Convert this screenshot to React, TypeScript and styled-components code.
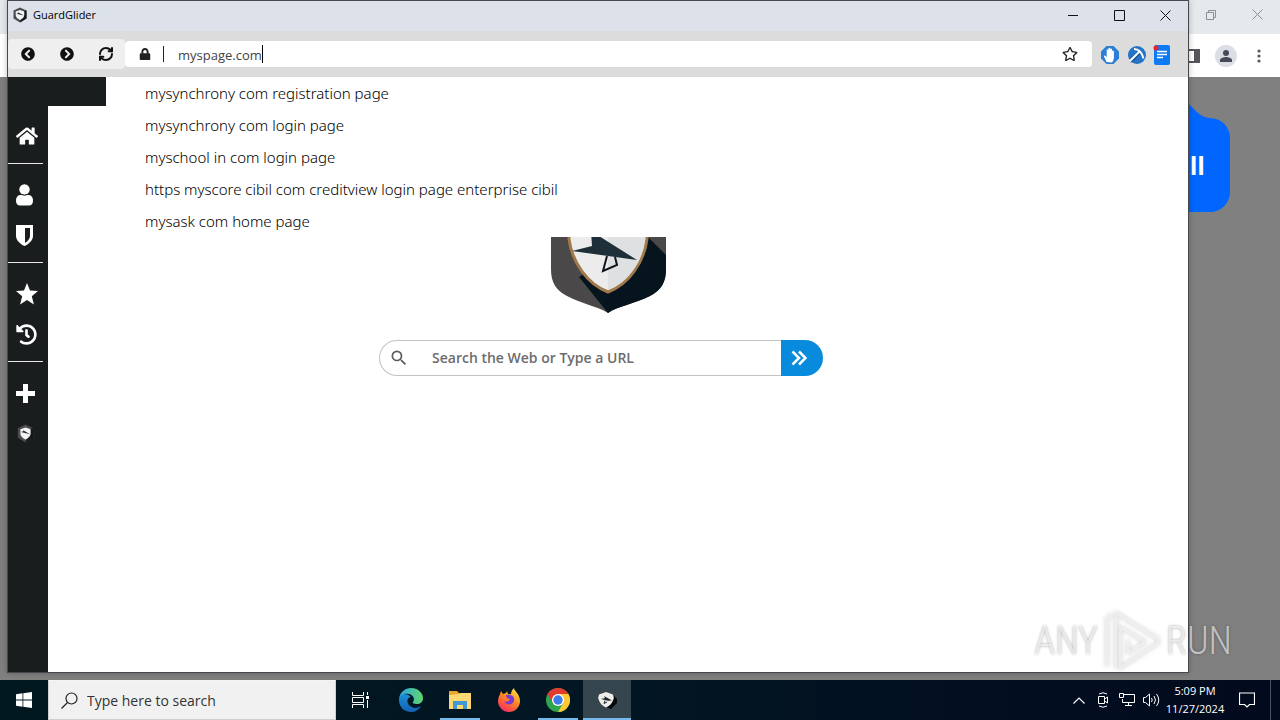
import React from "react";
import styled, { createGlobalStyle, css } from "styled-components";
import {
  FaChevronCircleLeft,
  FaChevronCircleRight,
  FaLock,
  FaRegStar,
  FaHome,
  FaHistory,
} from "react-icons/fa";
import { MdSearch } from "react-icons/md";
import { RefreshCw } from "lucide-react";

const GlobalStyle = createGlobalStyle`
  *, *::before, *::after { box-sizing: border-box; }
  html, body { margin: 0; padding: 0; }
  body { font-family: "Open Sans", "Noto Sans", sans-serif; color: #1c1c1c; }
  button, input { font: inherit; color: inherit; }
  button { border: 0; padding: 0; background: none; display: flex; align-items: center; justify-content: center; }
  svg { display: block; flex: none; }
`;

const Desktop = styled.div`
  position: relative;
  display: flex;
  flex-direction: column;
  height: 100vh;
  min-height: 560px;
  overflow: hidden;
`;

const Stage = styled.div`
  position: relative;
  flex: 1;
  display: flex;
  min-height: 0;
`;

/* Browser window in the background */
const BackWindow = styled.section`
  flex: 1;
  display: flex;
  flex-direction: column;
  background: #808080;
`;

const BackTitle = styled.div`
  height: 34px;
  display: flex;
  justify-content: flex-end;
  align-items: flex-start;
  background: #e6e9ec;
`;

const BackToolbar = styled.div`
  height: 43px;
  display: flex;
  align-items: center;
  justify-content: flex-end;
  gap: 10px;
  padding-right: 9px;
  background: #fff;
`;

const Avatar = styled.button`
  width: 22px;
  height: 22px;
  border-radius: 50%;
  background: #dbdee5;
`;

const BackPage = styled.div`
  display: flex;
  flex-direction: column;
  align-items: flex-end;
  padding: 24px 50px 0 0;
`;

const Install = styled.button`
  width: 260px;
  height: 94px;
  justify-content: flex-end;
  padding-right: 25px;
  border-radius: 0 20px 20px 0;
  background: #0066ff;
  color: #fff;
  font-size: 25px;
  font-weight: 700;
`;

const CaptionButton = styled.button<{ $faded?: boolean }>`
  width: 46px;
  height: 29px;
  color: ${(p) => (p.$faded ? "#8b8e92" : "#111")};
`;

/* Browser window in front */
const FrontWindow = styled.section`
  position: absolute;
  inset: 0 91px 7px 7px;
  display: flex;
  flex-direction: column;
  border: 1px solid #47474f;
  background: #fff;
  box-shadow: 0 0 6px rgba(0, 0, 0, 0.25);
`;

const TitleBar = styled.header`
  height: 30px;
  display: flex;
  align-items: flex-start;
  background: #dde1ea;
`;

const WindowTitle = styled.h1`
  flex: 1;
  display: flex;
  align-items: center;
  gap: 5px;
  margin: 0;
  padding: 6px 0 0 4px;
  font-size: 11px;
  line-height: 16px;
  font-weight: 400;
  color: #000;
`;

const Toolbar = styled.div`
  height: 46px;
  display: flex;
  align-items: center;
  padding-right: 16px;
  background: #dcdcdc;
`;

const NavGroup = styled.nav`
  display: flex;
  height: 30px;
  border-radius: 4px;
  background: #efefef;
  color: #111;
`;

const NavButton = styled.button`
  width: 39px;
`;

const AddressBar = styled.label`
  flex: 1;
  display: flex;
  align-items: center;
  height: 26px;
  padding: 0 14px;
  border-radius: 4px;
  background: #fff;
  color: #222;
`;

const Divider = styled.span`
  width: 1px;
  height: 16px;
  margin: 0 14px 0 12px;
  background: #222;
`;

const AddressInput = styled.input`
  field-sizing: content;
  border: 0;
  outline: 0;
  padding: 2px 0 0;
  background: transparent;
  font-size: 13px;
  line-height: 18px;
  color: #444;
`;

const Caret = styled.span`
  width: 1px;
  height: 18px;
  background: #000;
`;

const Spacer = styled.span`
  flex: 1;
`;

const Extensions = styled.div`
  display: flex;
  gap: 6px;
  padding: 2px 0 0 8px;
`;

const ExtensionButton = styled.button`
  width: 20px;
  height: 22px;
`;

const Body = styled.div`
  position: relative;
  flex: 1;
  display: flex;
  min-height: 0;
`;

const Sidebar = styled.aside`
  width: 40px;
  padding: 28px 5px 0 0;
  background: #191d1e;
  color: #fff;
`;

const SideSection = styled.div`
  display: flex;
  flex-direction: column;
  padding: 11px 0 7px;
  border-bottom: 1px solid #e8e8e8;
  &:last-child { border-bottom: 0; }
`;

const SideButton = styled.button`
  height: 40px;
  justify-content: flex-start;
  padding-left: 8px;
`;

const MainColumn = styled.div`
  flex: 1;
  display: flex;
  flex-direction: column;
`;

const TabStrip = styled.div`
  width: 58px;
  height: 29px;
  background: #191d1e;
`;

const NewTabPage = styled.main`
  flex: 1;
  display: flex;
  flex-direction: column;
  align-items: center;
  gap: 27px;
  padding: 87px 34px 0 0;
`;

const PageLogo = styled.div`
  margin-left: 15px;
`;

const SearchForm = styled.form`
  display: flex;
  width: 444px;
  height: 36px;
`;

const SearchField = styled.label`
  flex: 1;
  display: flex;
  align-items: center;
  gap: 23px;
  padding-left: 9px;
  border: 1px solid #c4c4c4;
  border-right: 0;
  border-radius: 18px 0 0 18px;
  color: #5c5c5c;
`;

const SearchInput = styled.input`
  flex: 1;
  min-width: 0;
  border: 0;
  outline: 0;
  padding: 0;
  background: transparent;
  font-size: 14px;
  line-height: 20px;
  font-weight: 600;
  &::placeholder { color: #6c6c6c; opacity: 1; }
`;

const SearchGo = styled.button`
  width: 42px;
  padding-right: 6px;
  border-radius: 0 18px 18px 0;
  background: #088bdc;
  color: #fff;
`;

const Suggestions = styled.ul`
  position: absolute;
  inset: 0 0 auto 98px;
  margin: 0;
  padding: 0;
  list-style: none;
  background: #fff;
`;

const Suggestion = styled.li`
  height: 32px;
  padding-left: 39px;
  font-family: "Noto Sans", "Open Sans", sans-serif;
  font-size: 15px;
  line-height: 32px;
  font-weight: 300;
  color: #000;
`;

/* Watermark */
const Watermark = styled.div`
  position: absolute;
  right: 48px;
  bottom: 48px;
  display: flex;
  align-items: center;
  gap: 5px;
  font-family: "Roboto Condensed", "Liberation Sans Narrow", "Liberation Sans", sans-serif;
  font-size: 38px;
  line-height: 62px;
  font-weight: 300;
  color: rgba(255, 255, 255, 0.6);
  text-shadow: 0 0 3px rgba(0, 0, 0, 0.35);
  pointer-events: none;
`;

const WatermarkSign = styled.svg`
  filter: drop-shadow(0 0 2px rgba(0, 0, 0, 0.25));
`;

/* Taskbar */
const Taskbar = styled.footer`
  flex: none;
  height: 40px;
  display: flex;
  background: linear-gradient(90deg, #011820, #021523 50%, #020a1e);
  color: #fff;
`;

const StartButton = styled.button`
  width: 48px;
`;

const TaskSearch = styled.label`
  width: 288px;
  display: flex;
  align-items: center;
  gap: 9px;
  padding-left: 12px;
  border: 1px solid #cfcfcf;
  border-top-color: #f4f4f4;
  background: #f1f1f1;
  color: #222;
`;

const TaskInput = styled.input`
  flex: 1;
  min-width: 0;
  border: 0;
  outline: 0;
  padding: 2px 0 0;
  background: transparent;
  font-size: 14px;
  line-height: 20px;
  &::placeholder { color: #333; opacity: 1; }
`;

const TaskView = styled.button`
  width: 48px;
  margin-right: 3px;
`;

const Apps = styled.div`
  display: flex;
  gap: 1px;
  flex: 1;
`;

const AppButton = styled.button<{ $state?: "open" | "active" }>`
  width: 48px;
  ${(p) =>
    p.$state === "open" &&
    css`
      background: linear-gradient(#76b9ed, #76b9ed) center bottom / 40px 2px no-repeat;
    `}
  ${(p) =>
    p.$state === "active" &&
    css`
      background: linear-gradient(#76b9ed, #76b9ed) center bottom / 48px 2px no-repeat #36464f;
    `}
`;

const Tray = styled.div`
  display: flex;
  padding-right: 4px;
`;

const TrayButton = styled.button<{ $wide?: boolean }>`
  width: ${(p) => (p.$wide ? 40 : 24)}px;
`;

const Clock = styled.button`
  width: 64px;
  flex-direction: column;
  font-size: 11px;
  line-height: 18px;
`;

const ShowDesktop = styled.button`
  width: 6px;
  margin-left: 3px;
  border-left: 1px solid #4c5566;
`;

const CloseGlyph = () => (
  <svg width="11" height="11" viewBox="0 0 11 11" stroke="currentColor" fill="none">
    <path d="M.5 .5l10 10M10.500 .5l-10 10" />
  </svg>
);

const ShieldBadge = ({ size }: { size: number }) => (
  <svg width={size} height={size} viewBox="0 0 16 16">
    <path d="M8 .5L14.500 3.500v8L8 15.500 1.500 11.500v-8z" fill="#4a4d4f" />
    <path d="M8 15.500l6.500-4v-8L12 4z" fill="#11171b" />
    <path d="M8 3l4.300 1.500v3.300C12.300 10.500 10.200 12 8 13 5.800 12 3.700 10.500 3.700 7.800V4.500z" fill="#f3f3f3" />
    <path d="M4.200 6.800l2-.6-.2-1 5.800 3.400z" fill="#1c2a33" />
  </svg>
);

const BigShield = () => (
  <svg width="115" height="120" viewBox="0 0 115 120">
    <path d="M0 15L57 0l58 15v61c0 14-5 21-16 27-16 8-32 10-42 17C46 113 31 111 16 103 5 97 0 90 0 76z" fill="#4a4848" />
    <path d="M97 44l18 18v14c0 14-5 21-16 27-16 8-32 10-42 17L28 84z" fill="#06141e" />
    <path d="M57 10l39 14v22c-3 23-18 45-39 53C36 91 21 69 18 46V24z" fill="#ececec" stroke="#a17a4b" strokeWidth="3" />
    <path d="M57 12l37 13v21c-2 22-16 43-37 51z" fill="#dfe0e1" />
    <path d="M40 38l46 29-65-9 20-5z" fill="#1e2f3a" />
    <path d="M56 63l-4 15 14-6-2-8" fill="none" stroke="#10161b" strokeWidth="2" />
  </svg>
);

export default function App() {
  return (
    <>
      <GlobalStyle />
      <Desktop>
        <Stage>
          <BackWindow aria-label="Background browser">
            <BackTitle>
              <CaptionButton $faded aria-label="Restore">
                <svg width="10" height="10" viewBox="0 0 10 10" fill="none" stroke="currentColor">
                  <path d="M.5 2.500h7v7h-7zM2.500 2.500v-2h7v7h-2" />
                </svg>
              </CaptionButton>
              <CaptionButton $faded aria-label="Close">
                <CloseGlyph />
              </CaptionButton>
            </BackTitle>
            <BackToolbar>
              <svg width="20" height="14" viewBox="0 0 20 14">
                <path d="M0 0h15v14H0zM2 2v10h7V2z" fill="#55565c" fillRule="evenodd" />
              </svg>
              <Avatar aria-label="Profile">
                <svg width="14" height="14" viewBox="0 0 14 14" fill="#474b57">
                  <circle cx="7" cy="4" r="3" />
                  <path d="M1 13v-2c0-2 4-3 6-3s6 1 6 3v2z" />
                </svg>
              </Avatar>
              <TrayButton aria-label="Menu">
                <svg width="4" height="14" viewBox="0 0 4 14" fill="#55565c">
                  <circle cx="2" cy="2" r="1.600" />
                  <circle cx="2" cy="7" r="1.600" />
                  <circle cx="2" cy="12" r="1.600" />
                </svg>
              </TrayButton>
            </BackToolbar>
            <BackPage>
              <svg width="60" height="17" viewBox="0 0 60 17">
                <path d="M0 17V0h14q3 1 7 5 9 11 18 12z" fill="#0066ff" />
              </svg>
              <Install>Install</Install>
            </BackPage>
          </BackWindow>

          <FrontWindow aria-label="GuardGlider">
            <TitleBar>
              <WindowTitle>
                <ShieldBadge size={16} />
                GuardGlider
              </WindowTitle>
              <CaptionButton aria-label="Minimize">
                <svg width="10" height="11" viewBox="0 0 10 11" stroke="currentColor">
                  <path d="M0 5.500h10" />
                </svg>
              </CaptionButton>
              <CaptionButton aria-label="Maximize">
                <svg width="11" height="11" viewBox="0 0 11 11" stroke="currentColor" fill="none">
                  <path d="M.5 .5h10v10H.5z" />
                </svg>
              </CaptionButton>
              <CaptionButton aria-label="Close">
                <CloseGlyph />
              </CaptionButton>
            </TitleBar>
            <Toolbar>
              <NavGroup>
                <NavButton aria-label="Back"><FaChevronCircleLeft size={14} /></NavButton>
                <NavButton aria-label="Forward"><FaChevronCircleRight size={14} /></NavButton>
                <NavButton aria-label="Reload"><RefreshCw size={16} strokeWidth={3} /></NavButton>
              </NavGroup>
              <AddressBar>
                <FaLock size={12} />
                <Divider />
                <AddressInput aria-label="Address" defaultValue="myspage.com" />
                <Caret />
                <Spacer />
                <FaRegStar size={16} />
              </AddressBar>
              <Extensions>
                <ExtensionButton aria-label="Block">
                  <svg width="20" height="20" viewBox="0 0 20 20">
                    <path d="M6.500 1h7L19 6.500v7L13.500 19h-7L1 13.500v-7z" fill="#2b7fd4" />
                    <path d="M6.500 17L4 11.500q0-1.500 1.700-.5l1 1.200V5q.9-1.500 1.700 0V3.500q1-1.500 1.900 0V4q1-1.300 1.800.3V6q1.100-1.200 1.800.2V13q-.4 3-2 4.500z" fill="#fff" />
                  </svg>
                </ExtensionButton>
                <ExtensionButton aria-label="Miner guard">
                  <svg width="20" height="20" viewBox="0 0 20 20">
                    <circle cx="11" cy="10" r="9" fill="#2473c4" />
                    <path d="M5 17.500l10-10" stroke="#16385e" strokeWidth="1" />
                    <path d="M4 16L13.500 6.500M8 4q7 0 9.500 9.500" fill="none" stroke="#fff" strokeWidth="1.800" />
                  </svg>
                </ExtensionButton>
                <ExtensionButton aria-label="Notes">
                  <svg width="20" height="22" viewBox="0 0 20 22">
                    <rect x="2" y="1" width="16" height="20" rx="2" fill="#0a7bf5" />
                    <path d="M5 7.500h10M5 10.500h10M5 13.500h6" stroke="#fff" strokeWidth="1.300" />
                    <circle cx="4" cy="4" r="2.500" fill="#e8212b" />
                  </svg>
                </ExtensionButton>
              </Extensions>
            </Toolbar>
            <Body>
              <Sidebar>
                <SideSection>
                  <SideButton aria-label="Home"><FaHome size={22} /></SideButton>
                </SideSection>
                <SideSection>
                  <SideButton aria-label="Account">
                    <svg width="18" height="22" viewBox="0 0 18 22" fill="currentColor">
                      <circle cx="8.500" cy="5.500" r="5.200" />
                      <path d="M5 11h7c3 0 5 2 5 5.500S15.500 21.500 13 21.500H4c-2.500 0-4-1.500-4-5S2 11 5 11z" />
                      <path d="M3.500 9.800q5 3 10 0" fill="none" stroke="#191d1e" strokeWidth="1" />
                    </svg>
                  </SideButton>
                  <SideButton aria-label="Protection">
                    <svg width="18" height="21" viewBox="0 0 18 21">
                      <path d="M0 0h17v11c0 4-4 8-8.500 10C4 19 0 15 0 11z" fill="#fff" />
                      <path d="M9 3h5v8c0 2.500-2 5-5 7z" fill="#191d1e" />
                    </svg>
                  </SideButton>
                </SideSection>
                <SideSection>
                  <SideButton aria-label="Favorites">
                    <svg width="22" height="22" viewBox="0 0 22 22" fill="currentColor">
                      <path d="M11 0l3 7.500 8 .6-6.200 5.200 2.100 8.200L11 17l-6.900 4.500 2.100-8.200L0 8.100l8-.6z" />
                    </svg>
                  </SideButton>
                  <SideButton aria-label="History"><FaHistory size={21} /></SideButton>
                </SideSection>
                <SideSection>
                  <SideButton aria-label="Add">
                    <svg width="19" height="19" viewBox="0 0 19 19">
                      <path d="M7 0h5v7h7v5h-7v7H7v-7H0V7h7z" fill="#fff" />
                    </svg>
                  </SideButton>
                  <SideButton aria-label="GuardGlider"><ShieldBadge size={19} /></SideButton>
                </SideSection>
              </Sidebar>
              <MainColumn>
                <TabStrip />
                <NewTabPage>
                  <PageLogo><BigShield /></PageLogo>
                  <SearchForm>
                    <SearchField>
                      <MdSearch size={20} />
                      <SearchInput aria-label="Search" placeholder="Search the Web or Type a URL" />
                    </SearchField>
                    <SearchGo type="button" aria-label="Go">
                      <svg width="16" height="16" viewBox="0 0 16 16" fill="none" stroke="currentColor" strokeWidth="2.500">
                        <path d="M1.500 1.500L8 8l-6.500 6.500M8 1.500L14.500 8 8 14.500" />
                      </svg>
                    </SearchGo>
                  </SearchForm>
                </NewTabPage>
              </MainColumn>
              <Suggestions>
                <Suggestion>mysynchrony com registration page</Suggestion>
                <Suggestion>mysynchrony com login page</Suggestion>
                <Suggestion>myschool in com login page</Suggestion>
                <Suggestion>https myscore cibil com creditview login page enterprise cibil</Suggestion>
                <Suggestion>mysask com home page</Suggestion>
              </Suggestions>
            </Body>
          </FrontWindow>
        </Stage>

        <Watermark>
          ANY
          <WatermarkSign width="58" height="62" viewBox="0 0 58 62" fill="none" stroke="rgba(240,240,240,.8)" strokeWidth="3">
            <path d="M4 56V8l5-3" />
            <path d="M13 58V3l42 26v4L17 58V17l25 15-17 11V30" strokeLinejoin="round" />
          </WatermarkSign>
          RUN
        </Watermark>

        <Taskbar>
          <StartButton aria-label="Start">
            <svg width="16" height="16" viewBox="0 0 16 16" fill="#fff">
              <path d="M0 2.200l6.500-.9v6.200H0zM7.300 1.200L16 0v7.500H7.300zM0 8.400h6.500v6.300L0 13.800zM7.300 8.400H16V16l-8.700-1.200z" />
            </svg>
          </StartButton>
          <TaskSearch>
            <svg width="17" height="17" viewBox="0 0 17 17" fill="none" stroke="#222" strokeWidth="1.200">
              <circle cx="10.500" cy="6.500" r="5.500" />
              <path d="M6.500 10.500L.5 16.500" />
            </svg>
            <TaskInput aria-label="Type here to search" placeholder="Type here to search" />
          </TaskSearch>
          <TaskView aria-label="Task view">
            <svg width="17" height="16" viewBox="0 0 17 16" fill="none" stroke="#fff">
              <path d="M.5 0v3.500h11V0M.5 16v-3.500h11V16M.5 5.500h11v5H.5zM15.500 0v3M15.500 8v8" />
              <path d="M14 4h3v3h-3z" fill="#fff" stroke="none" />
            </svg>
          </TaskView>
          <Apps>
            <AppButton aria-label="Edge">
              <svg width="24" height="24" viewBox="0 0 24 24">
                <defs>
                  <linearGradient id="edgeTop" x1="0" x2="1"><stop stopColor="#2aa6e3" /><stop offset="1" stopColor="#62d66b" /></linearGradient>
                  <linearGradient id="edgeBottom" x1="0" x2="0" y1="0" y2="1"><stop stopColor="#1b8fd8" /><stop offset="1" stopColor="#1460b4" /></linearGradient>
                </defs>
                <path d="M0 12C0 4 8 5 12 9c-4 0-5 6-1 9 4 3 8 2 11 0-3 5-7 6-10 6C5 24 0 19 0 12z" fill="url(#edgeBottom)" />
                <path d="M0 11C1 4 6 0 12 0c7 0 12 5 12 10 0 4-3 6-6 6-3 0-5-1-4-2 2-2 1-7-4-8-5-1-9 1-10 5z" fill="url(#edgeTop)" />
              </svg>
            </AppButton>
            <AppButton aria-label="File Explorer" $state="open">
              <svg width="22" height="20" viewBox="0 0 22 20">
                <path d="M0 1h8l2 2h11v4H0z" fill="#e9a82a" />
                <path d="M0 5l10-1 2-1h10v16H0z" fill="#fbd871" />
                <path d="M4 11h14v8h-4v-4H8v4H4z" fill="#4397d3" />
              </svg>
            </AppButton>
            <AppButton aria-label="Firefox">
              <svg width="24" height="24" viewBox="0 0 24 24">
                <defs>
                  <linearGradient id="fox" x1=".8" x2=".2" y1="0" y2="1"><stop stopColor="#ffe24a" /><stop offset=".45" stopColor="#ff8a1e" /><stop offset="1" stopColor="#f5246a" /></linearGradient>
                </defs>
                <path d="M4 3l2 3 3-1 1-2 1 3 3 0c0-3 2-5 3-6 0 3 6 6 6 13a11 11 0 0 1-22 0c0-4 2-6 3-10z" fill="url(#fox)" />
                <path d="M9 7c6-1 9 2 8 6-1 4-8 5-10 0 3 2 5 0 6-2-2 0-4-1-4-4z" fill="#7a3bd2" />
              </svg>
            </AppButton>
            <AppButton aria-label="Chrome" $state="open">
              <svg width="24" height="24" viewBox="0 0 24 24">
                <circle cx="12" cy="12" r="12" fill="#2da44e" />
                <path d="M1.600 6A12 12 0 0 1 22.400 6H12L6.800 15z" fill="#e33b2e" />
                <path d="M22.400 6A12 12 0 0 1 12 24l5.200-9L12 6z" fill="#fcc934" />
                <circle cx="12" cy="12" r="6" fill="#fff" />
                <circle cx="12" cy="12" r="4.700" fill="#3a7de8" />
              </svg>
            </AppButton>
            <AppButton aria-label="GuardGlider" $state="active">
              <svg width="20" height="20" viewBox="0 0 20 20">
                <path d="M15 4l5 5v4l-6 6-5-2z" fill="#05090c" />
                <path d="M9 2l7 2.500q1.500 3 0 6-2 5-7 7-5-2-7-7-1.500-3 0-6z" fill="#f0ece6" />
                <path d="M4 9l4-1-1-2 8 4.500-4 .3z" fill="#1b2730" />
                <path d="M8 10.500L7 13.500l3-1.500" fill="none" stroke="#1b2730" />
              </svg>
            </AppButton>
          </Apps>
          <Tray>
            <TrayButton aria-label="Show hidden icons">
              <svg width="12" height="7" viewBox="0 0 12 7" fill="none" stroke="#fff" strokeWidth="1.200">
                <path d="M.5 6.500L6 1l5.500 5.500" />
              </svg>
            </TrayButton>
            <TrayButton aria-label="Camera">
              <svg width="12" height="16" viewBox="0 0 12 16" fill="none" stroke="#fff">
                <path d="M1.500 4.500h6v7h-6zM7.500 7l3-2v6l-3-2M2 2q4-2.500 8 0M2 14q4 2.500 8 0" />
              </svg>
            </TrayButton>
            <TrayButton aria-label="Network">
              <svg width="16" height="14" viewBox="0 0 16 14" fill="none" stroke="#fff">
                <path d="M5 1.500h10.500v8H3.500V6M.5 .5h4v4h-4zM9.500 9.500v3M6 12.500h7" />
              </svg>
            </TrayButton>
            <TrayButton aria-label="Volume">
              <svg width="17" height="14" viewBox="0 0 17 14" fill="none" stroke="#fff">
                <path d="M.5 4.500h2L6.500 1v12l-4-3.500h-2zM8.500 5q1.500 2 0 4M11 3q3 4 0 8M13.500 1q4.500 6 0 12" />
              </svg>
            </TrayButton>
            <Clock>
              <span>5:09 PM</span>
              <span>11/27/2024</span>
            </Clock>
            <TrayButton $wide aria-label="Notifications">
              <svg width="16" height="16" viewBox="0 0 16 16" fill="none" stroke="#fff" strokeWidth="1.200">
                <path d="M.5 1h15v11.500h-5L8 15l-2.500-2.500h-5z" />
              </svg>
            </TrayButton>
            <ShowDesktop aria-label="Show desktop" />
          </Tray>
        </Taskbar>
      </Desktop>
    </>
  );
}
